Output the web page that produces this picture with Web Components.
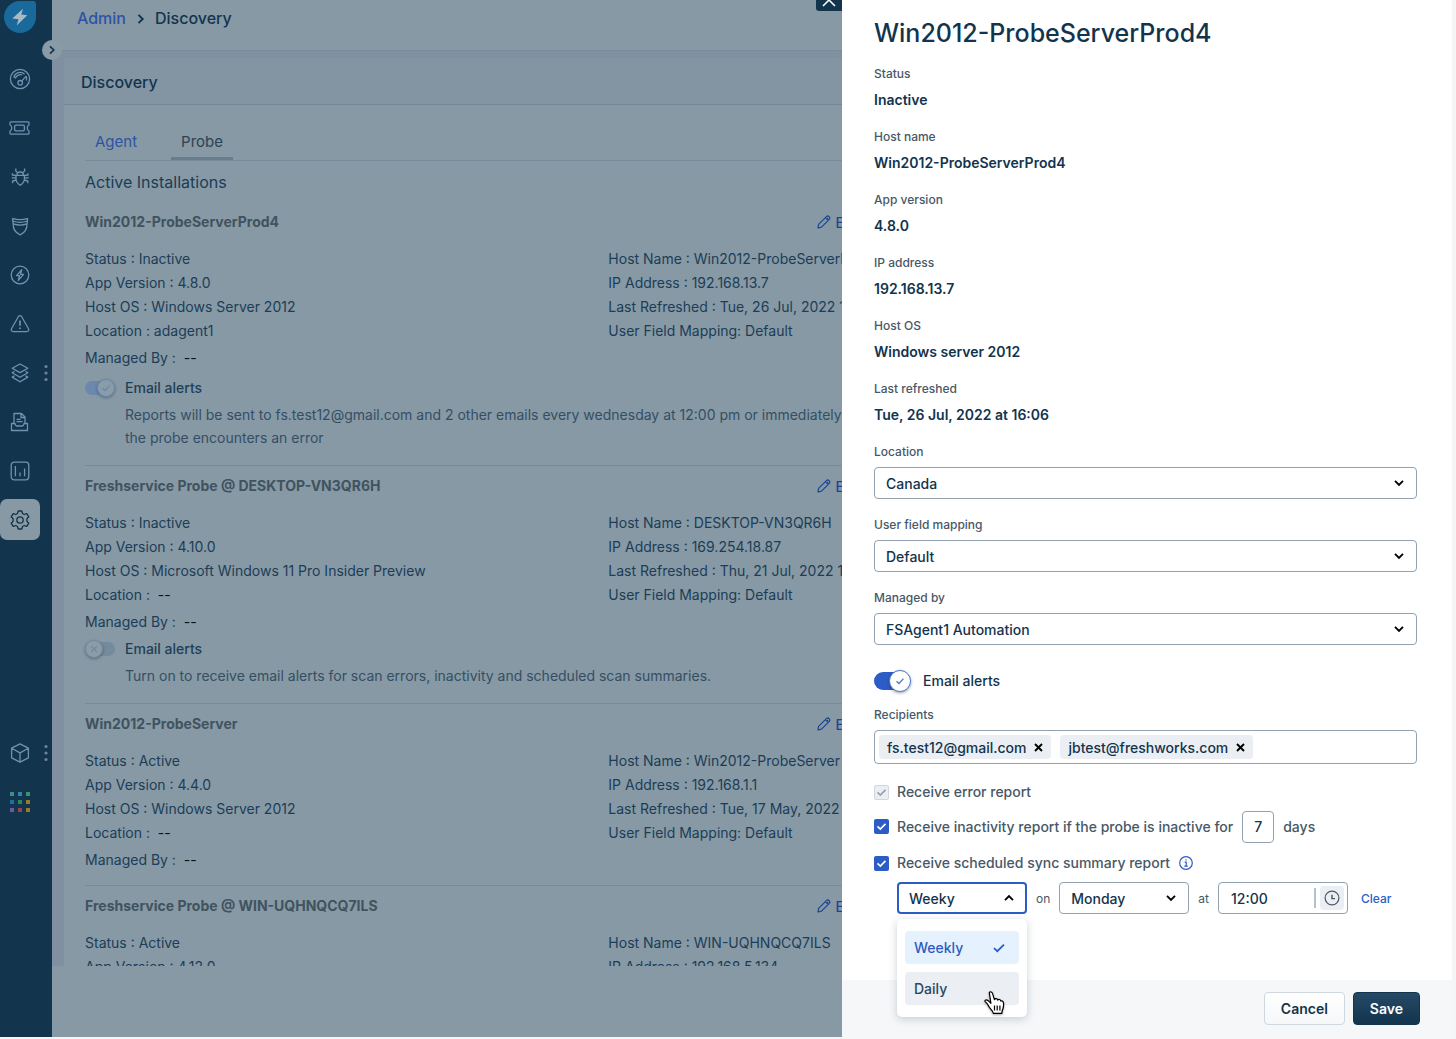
<!DOCTYPE html>
<html lang="en">
<head>
<meta charset="utf-8">
<title>Discovery</title>
<style>
  html, body { margin: 0; height: 100%; }
  body { font-family: Inter, "Liberation Sans", sans-serif; font-size: 14px; color: #12344d; background: #f3f6f8; overflow: hidden; }
</style>
</head>
<body>
<fs-app></fs-app>
<script>
const define = (name, html) => customElements.define(name, class extends HTMLElement {
  connectedCallback() {
    if (this.shadowRoot) return;
    const root = this.attachShadow({ mode: 'open' });
    root.innerHTML = typeof html === 'function' ? html(this) : html;
  }
});
const base = ':host,*{box-sizing:border-box}button,input,select{font:inherit;color:inherit;margin:0}';
const a = (el, n) => el.getAttribute(n) || '';

/* Icons ------------------------------------------------------------- */
const icons = {
  gauge: '<circle cx="10" cy="10" r="9.600"/><path d="M3.800 8.200A6.600 6.600 0 0 1 14.600 5.200M3.800 8.200l1.500.8q2.700-4.200 6.600-3.200M16.200 7.300q.8 2 .2 4.200M11.600 12.100l4.600-5"/><circle cx="10.200" cy="13.800" r="2.300"/>',
  ticket: '<path d="M1 3.800h17q1 0 1 1v2.200q-1.800.6-1.800 3t1.800 3v2.200q0 1-1 1H1q-1 0-1-1v-2.200q1.800-.6 1.800-3T0 7V4.800q0-1 1-1z"/><rect x="4.600" y="7.200" width="9.800" height="5.600" rx="1.400"/>',
  bug: '<path d="M6 8.300h8.400v3.500q0 3.800-4.200 6.500Q6 15.600 6 11.800zM7 8q0-3 3.200-3t3.200 3M7.200 5.300 5.800 4V1.500M13.200 5.300 14.600 4V1.500M6 8.500 2.400 8V6.300M14.400 8.500 18 8V6.300M6 10.800H1.700M14.400 10.800h4.300M6.200 13 2.600 14v2.300M14.200 13l3.600 1v2.300"/>',
  shield: '<path d="M2.500 2.300q7.600 2.600 15.200 0M2.800 5q7.300 2.700 14.600 0M3.400 7.900q6.700 2.300 13.400 0M3.200 7.800q-.3 8 6.900 11 7.200-3 6.900-11M2.500 2.300 3.200 7.900M17.700 2.300 17 7.900"/>',
  bolt: '<circle cx="10" cy="10" r="8.800"/><path d="M11.800 4.600 6.600 10.700h3L8.300 15.400l5.200-6.100h-3z"/>',
  alert: '<path d="M8.300 2.700q1.700-2 3.400 0l6.800 12q.9 2.700-1.800 2.900H3.300q-2.700-.2-1.800-2.900z"/><path d="M10 6.500v5.300M10 13.600v1.400" stroke-width="1.700"/>',
  layers: '<path d="M10 1 17.800 5.300 10 9.600 2.200 5.300zM4.500 8.300 2.200 9.700 10 14.200l7.800-4.500-2.300-1.400M4.500 12.700 2.200 14.100 10 18.800l7.800-4.700-2.300-1.400"/>',
  doc: '<path d="M4 11.500V1.500h7.500l3.500 3.500v6.500M11 1.500v4h4M6.600 7.300h4M6.600 9.700h6M1.500 11.500H5q.2 2.500 2.200 2.500h4.600q2 0 2.200-2.500h3.500v7h-16z"/>',
  chart: '<rect x="1.200" y="1.200" width="17.600" height="17.600" rx="3"/><path d="M5.400 5v10.300M10 11.500v3.800M14.600 7.500v7.800"/>',
  gear: '<path d="M8.200 1h3.600l.7 2.500 1.700 1 2.600-.8 2 3.100-1.900 1.900v2.600l1.900 1.900-2 3.100-2.600-.8-1.700 1-.7 2.500H8.200l-.7-2.500-1.700-1-2.600.8-2-3.100 1.900-1.900V8.700L1.200 6.800l2-3.100 2.600.8 1.700-1z"/><circle cx="10" cy="10" r="3.200"/>',
  cube: '<path d="M10 .8 18.400 5.200v9.600L10 19.200 1.600 14.800V5.200zM1.600 5.200 10 9.900l8.400-4.700M10 9.900v9.300"/>'
};
define('fs-icon', el => `<style>:host{display:block;width:20px;height:20px}svg{display:block;width:100%;height:100%;overflow:visible}</style>
<svg viewBox="0 0 20 20" fill="none" stroke="currentColor" stroke-width="1.300" stroke-linejoin="round" aria-hidden="true">${icons[a(el, 'name')]}</svg>`);

define('fs-apps', `<style>:host{display:grid;grid-template-columns:repeat(3,4px);gap:4px}i{width:4px;height:4px}</style>
${['#3a9188','#3187a3','#3f9168','#226f9d','#2b8a5d','#9b7c26','#71589a','#974649','#9b7c26'].map(c => `<i style="background:${c}"></i>`).join('')}`);

/* Sidebar ----------------------------------------------------------- */
const navItem = (name, label, cls = '') => `<a href="#" class="${cls}" aria-label="${label}"><span class="tile">${name === 'apps' ? '<fs-apps></fs-apps>' : `<fs-icon name="${name}"></fs-icon>`}</span>${cls.includes('more') ? '<svg class="dots" width="4" height="18" viewBox="0 0 4 18" fill="#6e8496"><circle cx="2" cy="2.500" r="1.600"/><circle cx="2" cy="9" r="1.600"/><circle cx="2" cy="15.500" r="1.600"/></svg>' : ''}</a>`;
define('fs-sidebar', `<style>${base}
:host{display:flex;flex-direction:column;position:relative;width:52px;flex:none;background:#12344d;color:#6f93b1}
.logo{display:block;margin:0 0 20px 3px;width:34px;height:34px}
nav{display:flex;flex-direction:column}
a{display:flex;align-items:center;height:49px;color:inherit}
.tile{display:flex;align-items:center;justify-content:center;width:40px;height:41px;flex:none}
.on .tile{background:#8799a4;color:#12344d;border-radius:7px}
.dots{margin-left:4px}
.low{margin-top:184px}
.knob{position:absolute;left:42px;top:40px;width:20px;height:20px;border:0;border-radius:50%;padding:0;background:#8a9ba7;color:#12344d;display:flex;align-items:center;justify-content:center;z-index:2}
</style>
<svg class="logo" viewBox="0 0 34 34" aria-hidden="true"><path d="M17 1h13q3 0 3 3v13A16 16 0 1 1 17 1z" fill="#19699a"/><path d="M20 8.700 9.300 18.400l6.200.8-1.800 6.300L24.300 15.300l-6-.8z" fill="#a9b9c5"/></svg>
<nav aria-label="Main">
${navItem('gauge','Dashboard')}${navItem('ticket','Tickets')}${navItem('bug','Problems')}${navItem('shield','Changes')}${navItem('bolt','Releases')}${navItem('alert','Alerts')}${navItem('layers','Assets','more')}${navItem('doc','Contracts')}${navItem('chart','Analytics')}${navItem('gear','Admin','on')}
</nav>
<nav class="low" aria-label="Apps">${navItem('cube','Marketplace','more')}${navItem('apps','Switcher')}</nav>
<button class="knob" aria-label="Expand"><svg width="8" height="10" viewBox="0 0 8 10" fill="none" stroke="currentColor" stroke-width="1.700"><path d="M2 1.300 5.800 5 2 8.700"/></svg></button>`);

/* Toggle ------------------------------------------------------------ */
define('fs-toggle', el => `<style>${base}
:host{display:flex;align-items:center;--w:30px;--h:14px;--k:18px;--track:#6d88ae;--ring:#6c86ae;--knob:#8b9ca9;gap:10px}
:host([size=large]){--w:37px;--h:18px;--k:22px;--track:#2c5cc5;--ring:#4f78cf;--knob:#fff;gap:12px}
.t{display:grid;align-items:center;width:var(--w);height:var(--k);flex:none}
.t>*{grid-area:1/1}
input{appearance:none;width:calc(var(--w) - 2px);height:var(--h);border-radius:20px;background:var(--track)}
.k{display:flex;align-items:center;justify-content:center;width:var(--k);height:var(--k);border-radius:50%;background:var(--knob);border:1px solid var(--ring);justify-self:end;box-shadow:0 1px 3px rgba(18,52,77,.45);pointer-events:none;color:var(--ring)}
:host([off]){--track:#758a9b;--ring:#74899b}
:host([off]) .k{justify-self:start}
:host([off]) input{justify-self:end}
label{line-height:24px;font-weight:500}
:host(:not([size=large])) label{color:#1f4059}
</style><span class="t"><input type="checkbox" role="switch" id="s" ${el.hasAttribute('off') ? '' : 'checked'}><span class="k"><svg width="10" height="10" viewBox="0 0 10 10" fill="none" stroke="currentColor" stroke-width="1.300">${el.hasAttribute('off') ? '<path d="M2 2l6 6M8 2 2 8"/>' : '<path d="M1.500 5.300 4 7.500 8.500 2.600"/>'}</svg></span></span><label for="s"><slot></slot></label>`);

/* Probe installation ------------------------------------------------ */
define('fs-install', `<style>${base}
:host{display:block;border-top:1px solid #768a9a;padding:8px 0 13px}
:host([first]){border-top:0;padding-top:0}
:host([alerts]){padding-bottom:16px}
header{display:flex;justify-content:space-between;align-items:center;height:24px;padding-right:9px}
h3{margin:0;font-size:14px;font-weight:700;line-height:24px;color:#40535f}
button{display:flex;align-items:center;gap:5px;border:0;background:none;padding:0;font-weight:500;color:#1d4690}
.facts{display:grid;grid-template-columns:minmax(0,2fr) minmax(0,1fr);grid-auto-rows:24px;line-height:24px;margin-top:13px;color:#1b3d58}
.facts,.by{white-space:pre}
.by{line-height:24px;margin-top:3px;color:#1b3d58}
::slotted([slot=alert]){margin-top:3px}
:host([first]) ::slotted([slot=alert]){margin-top:6px}
.note{margin:3px 0 0 40px;line-height:23px;color:#344f64}
:host(:not([alerts])) .note{display:none}
</style>
<header><h3><slot name="title"></slot></h3><button><svg width="14" height="14" viewBox="0 0 14 14" fill="none" stroke="currentColor" stroke-width="1.200" stroke-linejoin="round"><path d="M1 13l.6-3.600 7.800-7.800q1.400-1.200 2.700 0t.2 2.700l-7.800 7.800zM8.400 2.600l2.900 2.900M9.800 4.200 11 3"/></svg>Edit</button></header>
<div class="facts"><slot></slot></div>
<div class="by"><slot name="by"></slot></div>
<slot name="alert"></slot>
<div class="note"><slot name="note"></slot></div>`);

const install = (p, first) => `<fs-install ${first ? 'first' : ''} ${p.note ? 'alerts' : ''}>
<span slot="title">${p.name}</span>
<span>Status : ${p.status}</span><span>Host Name : ${p.host}</span><span>App Version : ${p.ver}</span><span>IP Address : ${p.ip}</span>${p.os ? `<span>Host OS : ${p.os}</span><span>Last Refreshed : ${p.ref}</span><span>Location : ${p.loc || ' <b>--</b>'}</span><span>User Field Mapping: Default</span>
<span slot="by">Managed By :  <b>--</b></span>` : ''}
${p.note ? `<fs-toggle slot="alert" ${p.off ? 'off' : ''}>Email alerts</fs-toggle><span slot="note">${p.note}</span>` : ''}
</fs-install>`;
const probes = [
  { name: 'Win2012-ProbeServerProd4', status: 'Inactive', host: 'Win2012-ProbeServerProd4', ver: '4.8.0', ip: '192.168.13.7', os: 'Windows Server 2012', ref: 'Tue, 26 Jul, 2022 16:06', loc: 'adagent1', note: 'Reports will be sent to fs.test12@gmail.com and 2 other emails every wednesday at 12:00 pm or immediately if the probe encounters an error' },
  { name: 'Freshservice Probe @ DESKTOP-VN3QR6H', status: 'Inactive', host: 'DESKTOP-VN3QR6H', ver: '4.10.0', ip: '169.254.18.87', os: 'Microsoft Windows 11 Pro Insider Preview', ref: 'Thu, 21 Jul, 2022 16:06', off: 1, note: 'Turn on to receive email alerts for scan errors, inactivity and scheduled scan summaries.' },
  { name: 'Win2012-ProbeServer', status: 'Active', host: 'Win2012-ProbeServer', ver: '4.4.0', ip: '192.168.1.1', os: 'Windows Server 2012', ref: 'Tue, 17 May, 2022 16:06' },
  { name: 'Freshservice Probe @ WIN-UQHNQCQ7ILS', status: 'Active', host: 'WIN-UQHNQCQ7ILS', ver: '4.12.0', ip: '192.168.5.134' }
];

/* Discovery page ---------------------------------------------------- */
define('fs-discovery', `<style>${base}
:host{display:flex;flex-direction:column;flex:1;min-width:0;background:#8799a4;padding-bottom:71px}
.crumbs{display:flex;align-items:flex-start;gap:10px;height:50px;flex:none;padding:6px 25px 0;font-size:16px;line-height:24px;font-weight:500;overflow:hidden}
.crumbs a{color:#2d54a2;text-decoration:none}
.crumbs svg{margin-top:7px}
.band{flex:1;min-height:0;overflow:hidden;background:#8090a1;border-top:1px solid #7b8c9d;padding:7px 0 0 12px}
.card{background:#8799a4;min-height:100%}
h1{margin:0;height:47px;line-height:48px;padding:0 17px;font-size:16px;font-weight:500;background:#8395a3;border-bottom:1px solid #73879a}
.body{padding:0 586px 0 21px}
.tabs{display:flex;height:56px;padding-top:20px;border-bottom:1px solid #788c9c;margin-right:-586px;font-size:15px}
.tabs a{padding:0 10px;margin-right:24px;height:35px;line-height:34px;text-decoration:none;color:#2d54a2}
.tabs a.on{color:#2c4353;border-bottom:3px solid #677d8e}
h2{margin:0;font-size:16px;font-weight:400;line-height:24px;padding:9px 0 16px;color:#1b3d58}
b{font-weight:400;color:#04121d}
</style>
<div class="crumbs"><a href="#">Admin</a><svg width="9" height="12" viewBox="0 0 9 12" fill="none" stroke="currentColor" stroke-width="1.900"><path d="M2.500 1.800 6.700 6 2.500 10.200"/></svg><span>Discovery</span></div>
<div class="band"><div class="card"><h1>Discovery</h1><div class="body">
<nav class="tabs"><a href="#">Agent</a><a href="#" class="on">Probe</a></nav>
<h2>Active Installations</h2>
${probes.map((p, i) => install(p, i === 0)).join('')}
</div></div></div>`);

/* Drawer parts ------------------------------------------------------ */
define('fs-fact', el => `<style>${base}:host{display:block;height:63px}
.l{font-size:12px;font-weight:500;line-height:20px;color:#475867}
.v{font-size:14px;font-weight:600;line-height:24px;margin-top:4px}</style>
<div class="l">${a(el, 'label')}</div><div class="v"><slot></slot></div>`);

define('fs-select', el => `<style>${base}
:host{display:block;color:#12344d}
label{display:block;font-size:12px;font-weight:500;line-height:20px;color:#475867;margin-bottom:5px}
.box{display:grid;align-items:center}
.box>*{grid-area:1/1}
select{appearance:none;width:100%;height:32px;border:1px solid #92a2b1;border-radius:4px;background:#fff;padding:0 11px;font-size:14px;font-weight:500;color:#12344d}
:host([open]) select{border:2px solid #2c5cc5;padding:0 10px}
svg{justify-self:end;margin-right:13px;pointer-events:none}
</style>${a(el, 'label') ? `<label for="s">${a(el, 'label')}</label>` : ''}
<div class="box"><select id="s" aria-label="${a(el, 'label') || a(el, 'name')}"><option>${a(el, 'value')}</option></select>
<svg width="10" height="8" viewBox="0 0 10 8" fill="none" stroke="#000" stroke-width="1.900"><path d="${el.hasAttribute('open') ? 'M1 6.200 5 2.200l4 4' : 'M1 1.800l4 4 4-4'}"/></svg></div>`);

define('fs-check', el => `<style>${base}
:host{display:flex;align-items:center;gap:8px;color:#475867;font-weight:500}
.b{display:grid;width:15px;height:15px;flex:none;place-items:center}
.b>*{grid-area:1/1}
input{appearance:none;width:15px;height:15px;border-radius:2px;background:#2c5cc5}
input:disabled{background:#ebeff3;border:1px solid #cfd7df}
svg{pointer-events:none}
label{line-height:24px}
</style><span class="b"><input type="checkbox" id="c" checked ${el.hasAttribute('disabled') ? 'disabled' : ''}><svg width="11" height="9" viewBox="0 0 11 9" fill="none" stroke="${el.hasAttribute('disabled') ? '#92a2b1' : '#fff'}" stroke-width="1.700"><path d="M1.500 4.400 4.300 7 9.500 1.800"/></svg></span><label for="c"><slot></slot></label>`);

define('fs-chip', `<style>${base}
:host{display:flex;align-items:center;gap:8px;height:24px;padding:0 8px;border-radius:4px;background:#ebeff3;font-weight:500;color:#12344d}
button{border:0;background:none;padding:0;display:flex;width:9px}</style>
<slot></slot><button aria-label="Remove"><svg width="9" height="9" viewBox="0 0 9 9" stroke="#000" stroke-width="1.900"><path d="M1 1l7 7M8 1 1 8"/></svg></button>`);

define('fs-menu', `<style>${base}
:host{display:flex;flex-direction:column;gap:8px;padding:12px 8px;background:#fff;border-radius:5px;box-shadow:0 2px 8px rgba(18,52,77,.22);font-size:14px;font-weight:500}
button{display:flex;align-items:center;justify-content:space-between;height:33px;border:0;border-radius:4px;padding:0 14px 0 9px;background:#ebeef2;color:#264966;text-align:left}
button.on{background:#e5f2fd;color:#2c5cc5}
</style><button class="on" role="option" aria-selected="true">Weekly<svg width="12" height="10" viewBox="0 0 12 10" fill="none" stroke="currentColor" stroke-width="1.800"><path d="M1 5.200 4.300 8.200 11 1.600"/></svg></button><button role="option">Daily</button>`);

define('fs-pointer', `<style>:host{display:block}svg{display:block;filter:drop-shadow(0 1px 1px rgba(0,0,0,.35))}</style>
<svg width="22" height="24" viewBox="0 0 22 24" fill="#fff" stroke="#000" stroke-width="1.200" stroke-linejoin="round"><path d="M5.400 2.400Q5 .8 6.500.8t2 1.600l1.900 6.300q.6-1.400 2-1 1.100.3 1.300 1.400.8-1 1.900-.6 1 .3 1.300 1.600.9-.6 1.800.1.800.7.9 2.400.1 3.400-.7 5.300-.9 1.600-1 4.400H9.300q-.2-1.800-2.300-4-2.200-2.300-3.200-4.800Q2.500 11.700 1.200 10.600q-.7-1.100.5-1.600 1.700-.5 3.600 1.700l1.600 1.600z"/><path d="M10.500 14.500v5M13.200 14.500v5M15.900 14.500v5" fill="none"/></svg>`);

/* Drawer ------------------------------------------------------------ */
define('fs-drawer', `<style>${base}
:host{display:flex;flex-direction:column;position:fixed;top:0;right:0;bottom:0;width:614px;background:#fff;border-right:4px solid #f4f6f6;z-index:5}
.close{position:absolute;left:-26px;top:-14px;width:26px;height:25px;border:0;border-radius:0 0 0 3px;background:#12344d;padding:8px 0 0;display:flex;justify-content:center;color:#fff}
.main{flex:1;min-height:0;padding:15px 35px 0 32px}
h2{margin:0 0 13px;font-size:25px;line-height:36px;font-weight:500}
.main>fs-select{height:73px}
.main>fs-toggle{margin:8px 0 12px}
.lab{display:block;font-size:12px;font-weight:500;line-height:20px;color:#475867;margin-bottom:5px}
.recips{display:flex;gap:9px;align-items:center;height:34px;border:1px solid #92a2b1;border-radius:4px;padding:0 4px;margin-bottom:16px}
.recips input{flex:1;min-width:0;border:0;outline:0;background:none}
.row{display:flex;align-items:center;gap:9px;color:#475867;font-weight:500}
.inact{height:33px;margin-top:6px}
.num{width:32px;height:32px;border:1px solid #92a2b1;border-radius:4px;text-align:center;font-weight:500;color:#12344d;padding:0}
.sync{height:24px;margin-top:8px}
.when{margin:7px 0 0 23px;position:relative;font-size:12px;font-weight:400}
.when fs-select{width:130px}
.time{display:flex;align-items:center;width:130px;height:32px;border:1px solid #92a2b1;border-radius:4px;background:#fff;padding:0 3px 0 12px}
.time input{flex:1;min-width:0;border:0;padding:0;font-size:14px;font-weight:500;color:#12344d;background:none}
.time .clock{width:24px;height:24px;border:0;border-radius:4px;background:#ebeff3;display:flex;align-items:center;justify-content:center;padding:0;margin-left:4px}
.time i{width:2px;height:20px;background:#b4c0cb}
.when a{color:#2c5cc5;text-decoration:none;margin-left:4px;font-weight:500}
fs-menu{position:absolute;left:0;top:37px;width:130px}
fs-pointer{position:absolute;left:87px;top:109px;z-index:2}
footer{display:flex;justify-content:flex-end;gap:8px;height:59px;padding:12px 32px 0;background:#f5f7f9}
footer button{height:33px;border-radius:4px;padding:0 16px;font-weight:600;border:1px solid #cfd7df;background:linear-gradient(#fff,#f5f7f9)}
footer .save{border-color:#12344d;background:linear-gradient(#264966,#12344d);color:#fff}
</style>
<button class="close" aria-label="Close"><svg width="14" height="14" viewBox="0 0 14 14" stroke="currentColor" stroke-width="1.600"><path d="M1 0l12 12M13 0 1 12"/></svg></button>
<div class="main">
<h2>Win2012-ProbeServerProd4</h2>
<fs-fact label="Status">Inactive</fs-fact>
<fs-fact label="Host name">Win2012-ProbeServerProd4</fs-fact>
<fs-fact label="App version">4.8.0</fs-fact>
<fs-fact label="IP address">192.168.13.7</fs-fact>
<fs-fact label="Host OS">Windows server 2012</fs-fact>
<fs-fact label="Last refreshed">Tue, 26 Jul, 2022 at 16:06</fs-fact>
<fs-select label="Location" value="Canada"></fs-select>
<fs-select label="User field mapping" value="Default"></fs-select>
<fs-select label="Managed by" value="FSAgent1 Automation"></fs-select>
<fs-toggle size="large">Email alerts</fs-toggle>
<label class="lab" for="r">Recipients</label>
<div class="recips"><fs-chip>fs.test12@gmail.com</fs-chip><fs-chip>jbtest@freshworks.com</fs-chip><input id="r" type="text"></div>
<fs-check disabled>Receive error report</fs-check>
<div class="row inact"><fs-check>Receive inactivity report if the probe is inactive for</fs-check><input class="num" type="text" value="7" aria-label="Days inactive"><span>days</span></div>
<div class="row sync"><fs-check>Receive scheduled sync summary report</fs-check><svg width="14" height="14" viewBox="0 0 14 14" fill="none" stroke="#2c5cc5" stroke-width="1.200"><circle cx="7" cy="7" r="6.300"/><path d="M5.600 6.200H7.200v4M5.300 10.200h3.500M7 3.200v1.400"/></svg></div>
<div class="row when"><fs-select name="Frequency" value="Weeky" open></fs-select><span>on</span><fs-select name="Day" value="Monday"></fs-select><span>at</span>
<span class="time"><input type="text" value="12:00" aria-label="Time"><i></i><button class="clock" aria-label="Pick a time"><svg width="16" height="16" viewBox="0 0 16 16" fill="none" stroke="#475867" stroke-width="1.200"><circle cx="8" cy="8" r="6.900"/><path d="M8 4.800V8.600h3" stroke-width="1.400"/></svg></button></span><a href="#">Clear</a>
<fs-menu></fs-menu><fs-pointer></fs-pointer></div>
</div>
<footer><button>Cancel</button><button class="save">Save</button></footer>`);

define('fs-app', `<style>:host{display:flex;height:calc(100vh - 2px);overflow:hidden}</style>
<fs-sidebar></fs-sidebar><fs-discovery></fs-discovery><fs-drawer></fs-drawer>`);
</script>
</body>
</html>
